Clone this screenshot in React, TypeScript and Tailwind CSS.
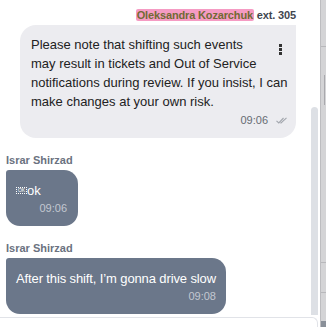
import React from "react";

const Kebab = () => (
  <svg width="3" height="11" viewBox="0 0 3 11">
    <rect x="0" y="0" width="3" height="3" fill="#333" />
    <rect x="0" y="4" width="3" height="3" fill="#333" />
    <rect x="0" y="8" width="3" height="3" fill="#333" />
  </svg>
);

const DoubleCheck = () => (
  <svg width="12" height="7" viewBox="0 0 12 7" fill="none" stroke="#a3a7ae" strokeWidth="1.1">
    <path d="M0.5 3.8 L2.8 6 L7.5 1" />
    <path d="M4.5 5.5 L5 6 L10.5 0.8" />
  </svg>
);

const Name = ({ children }: { children: React.ReactNode }) => (
  <div className="h-[14px] leading-[14px] text-[11px] font-bold text-[#6b7280]">{children}</div>
);

const lines = [
  "Please note that shifting such events",
  "may result in tickets and Out of Service",
  "notifications during review. If you insist, I can",
  "make changes at your own risk.",
];

export default function App() {
  return (
    <div className="w-[326px] h-[327px] flex overflow-hidden bg-white font-['Liberation_Sans',Arial,sans-serif]">
      <div className="w-[320px] flex flex-col">
        <div className="flex-1 flex min-h-0">
          {/* message list */}
          <div className="w-[311px] pl-[6px] pr-[15px] pt-[8px] flex flex-col">
            <div className="h-[14px] leading-[14px] text-[11px] font-bold text-right tracking-[-0.15px]">
              <span className="bg-[#f59bc3] text-[#716a33] rounded-[2px] px-[1px]">Oleksandra Kozarchuk</span>
              <span className="text-[#3f4650]"> ext. 305</span>
            </div>

            <div className="mt-[3px] ml-[14px] bg-[#ececf0] rounded-[16px] rounded-tr-none pl-[11px] pr-[8px] pt-[10px] pb-[11px]">
              <div className="relative text-[13px] leading-[19px] text-[#222] whitespace-nowrap">
                <div className="absolute right-[6px] top-[9px] flex">
                  <Kebab />
                </div>
                {lines.map((l) => (
                  <div key={l}>{l}</div>
                ))}
              </div>
              <div className="mt-[2px] h-[14px] flex items-center justify-end text-[11px] text-[#666b73]">
                <span>09:06</span>
                <span className="ml-[8px] flex items-center">
                  <DoubleCheck />
                </span>
              </div>
            </div>

            <div className="mt-[15px]">
              <Name>Israr Shirzad</Name>
            </div>
            <div className="mt-[3px] self-start min-w-[72px] bg-[#6b778a] rounded-[14px] rounded-tl-[3px] pl-[10px] pr-[11px] pt-[11px] pb-[11px]">
              <div className="text-[13px] leading-[19px] text-white flex items-center">
                <span className="inline-flex items-center justify-center w-[11px] h-[7px] border border-dotted border-white text-[5px] leading-[5px]">
                  OK
                </span>
                <span>ok</span>
              </div>
              <div className="mt-[1px] h-[14px] leading-[14px] text-right text-[11px] text-[#c3c8d1]">09:06</div>
            </div>

            <div className="mt-[15px]">
              <Name>Israr Shirzad</Name>
            </div>
            <div className="mt-[3px] self-start bg-[#6b778a] rounded-[14px] rounded-tl-[3px] pl-[10px] pr-[10px] pt-[11px] pb-[11px]">
              <div className="text-[13px] leading-[19px] text-white whitespace-nowrap tracking-[-0.12px]">
                After this shift, I’m gonna drive slow
              </div>
              <div className="mt-[1px] h-[14px] leading-[14px] text-right text-[11px] text-[#c3c8d1]">09:08</div>
            </div>
          </div>

          {/* inner scrollbar */}
          <div className="w-[9px] pt-[107px] pr-[2px]">
            <div className="h-full bg-[#dde0e5] rounded-t-full" />
          </div>
        </div>

        {/* input top edge */}
        <div className="mt-[2px] h-[10px] border-t border-r border-[#e1e3e8] rounded-tr-[6px] mr-[2px]" />
      </div>

      {/* outer page scrollbar */}
      <div className="w-[6px] bg-[#d4d4d6] border-l border-[#bdbdc0] flex flex-col">
        <div className="h-[48px] border-b border-[#b8b8bb]" />
        <div className="h-[30px] ml-[3px] w-[1px] bg-[#a9a9ad] mt-[28px]" />
        <div className="h-[160px] border-b border-[#b8b8bb]" />
        <div className="h-[30px] border-b border-[#b8b8bb]" />
        <div className="mt-[28px] h-[6px] bg-[#8a9099]" />
      </div>
    </div>
  );
}
